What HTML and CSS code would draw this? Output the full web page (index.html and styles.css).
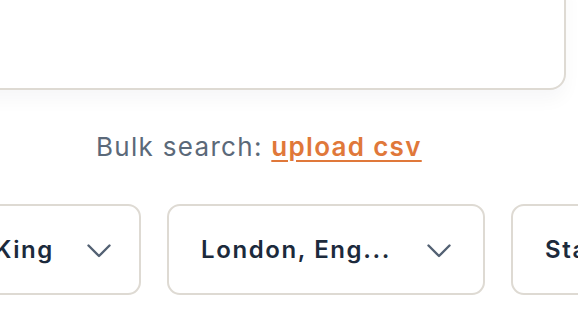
FILE: index.html
```html
<!DOCTYPE html>
<html lang="en">
<head>
<meta charset="utf-8">
<link rel="stylesheet" href="styles.css">
</head>
<body>
<div class="page">
  <div class="card"></div>
  <p class="bulk">Bulk search: <a class="upload" href="#">upload csv</a></p>
  <div class="filters">
    <div class="select select-first">
      <span class="select-label">Stephen King</span>
      <svg class="chev" viewBox="0 0 24 14" width="24" height="14"><path d="M1.5 1.5 L12 12 L22.5 1.5" fill="none" stroke="#536173" stroke-width="2.4" stroke-linecap="round" stroke-linejoin="round"/></svg>
    </div>
    <div class="select">
      <span class="select-label">London, Eng...</span>
      <svg class="chev" viewBox="0 0 24 14" width="24" height="14"><path d="M1.5 1.5 L12 12 L22.5 1.5" fill="none" stroke="#536173" stroke-width="2.4" stroke-linecap="round" stroke-linejoin="round"/></svg>
    </div>
    <div class="select">
      <span class="select-label">Status</span>
      <svg class="chev" viewBox="0 0 24 14" width="24" height="14"><path d="M1.5 1.5 L12 12 L22.5 1.5" fill="none" stroke="#536173" stroke-width="2.4" stroke-linecap="round" stroke-linejoin="round"/></svg>
    </div>
  </div>
</div>
</body>
</html>
```

FILE: styles.css
```css
html, body {
  margin: 0;
  padding: 0;
  background: #ffffff;
  overflow: hidden;
}
body {
  font-family: Inter, "Open Sans", sans-serif;
  width: 578px;
  height: 314px;
}
.page {
  display: flex;
  flex-direction: column;
}
.card {
  margin-top: -30px;
  margin-left: -60px;
  width: 622px;
  height: 116px;
  border: 2px solid #dedad3;
  border-radius: 16px;
  background: #ffffff;
  box-shadow: 0 10px 18px rgba(30, 40, 60, 0.035);
  flex: none;
}
.bulk {
  margin: 42px 0 0 96px;
  font-size: 26px;
  line-height: 30px;
  letter-spacing: 1.3px;
  color: #5b6979;
  white-space: nowrap;
}
.upload {
  color: #e0783a;
  font-weight: 600;
  text-decoration: underline;
  text-decoration-thickness: 2px;
  text-underline-offset: 4px;
}
.filters {
  display: flex;
  gap: 26px;
  margin-top: 42px;
  margin-left: -177px;
}
.select {
  flex: none;
  box-sizing: border-box;
  width: 318px;
  height: 91px;
  border: 2px solid #dedad3;
  border-radius: 13px;
  display: flex;
  align-items: center;
  justify-content: space-between;
  padding: 0 32px 0 32px;
  background: #fff;
}
.select-first {
  padding-left: 54px;
  padding-right: 28px;
}
.select-label {
  font-size: 24px;
  font-weight: 600;
  letter-spacing: 1.6px;
  color: #1c2a3c;
  white-space: nowrap;
}
.chev {
  display: block;
  margin-top: 2px;
}
```
